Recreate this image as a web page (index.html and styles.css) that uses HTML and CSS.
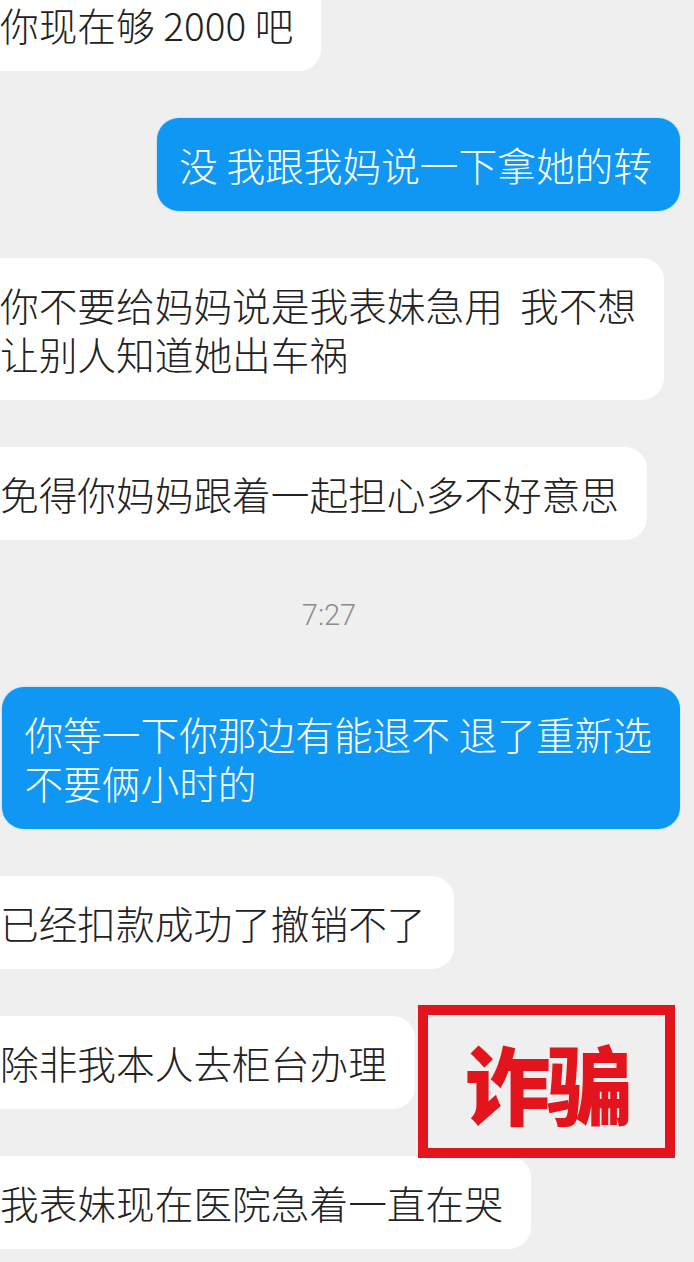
FILE: index.html
```html
<!DOCTYPE html>
<html lang="zh-CN">
<head>
    <meta charset="UTF-8">
    <meta name="viewport" content="width=device-width, initial-scale=1.0">
    <title>聊天记录</title>
    <link rel="stylesheet" href="styles.css">
</head>
<body>
    <div class="chat">
        <div class="msg in">你现在够 2000 吧</div>
        <div class="msg out">没 我跟我妈说一下拿她的转</div>
        <div class="msg in">你不要给妈妈说是我表妹急用&nbsp; 我不想<br>让别人知道她出车祸</div>
        <div class="msg in">免得你妈妈跟着一起担心多不好意思</div>

        <div class="time">7:27</div>

        <div class="msg out">你等一下你那边有能退不 退了重新选<br>不要俩小时的</div>
        <div class="msg in">已经扣款成功了撤销不了</div>

        <div class="row">
            <div class="msg in">除非我本人去柜台办理</div>
            <div class="stamp">诈骗</div>
        </div>

        <div class="msg in">我表妹现在医院急着一直在哭</div>
    </div>
</body>
</html>
```

FILE: styles.css
```css
* {
    margin: 0;
    padding: 0;
    box-sizing: border-box;
}

html {
    background: #efefef;
}

body {
    font-family: "Noto Sans CJK SC", "Noto Sans", sans-serif;
    color: #222;
    overflow: hidden;
}

.chat {
    display: flex;
    flex-direction: column;
    gap: 47px;
    margin: -22px 14px 0 -22px;
}

.msg {
    padding: 22px 28px 22px 22px;
    font-size: 38.7px;
    font-weight: 300;
    line-height: 49px;
    border-radius: 22px;
    white-space: nowrap;
}

.msg.in {
    align-self: flex-start;
    background: #ffffff;
}

.msg.out {
    align-self: flex-end;
    background: #0f97f3;
    color: #fff;
    box-shadow: 0 0 2px #8fd4fb;
}

.time {
    text-align: center;
    font-family: Roboto, "Noto Sans", sans-serif;
    font-size: 29px;
    font-weight: 300;
    line-height: 40px;
    color: #8b8b8b;
    margin: 8px 0 5px;
}

.row {
    position: relative;
    display: flex;
}

.stamp {
    position: absolute;
    left: 440px;
    top: -11px;
    width: 257px;
    height: 153px;
    border: 10px solid #e3141c;
    display: flex;
    align-items: center;
    justify-content: center;
    color: #e3141c;
    font-size: 86px;
    font-weight: 900;
    letter-spacing: -4px;
    line-height: 1;
}
```
